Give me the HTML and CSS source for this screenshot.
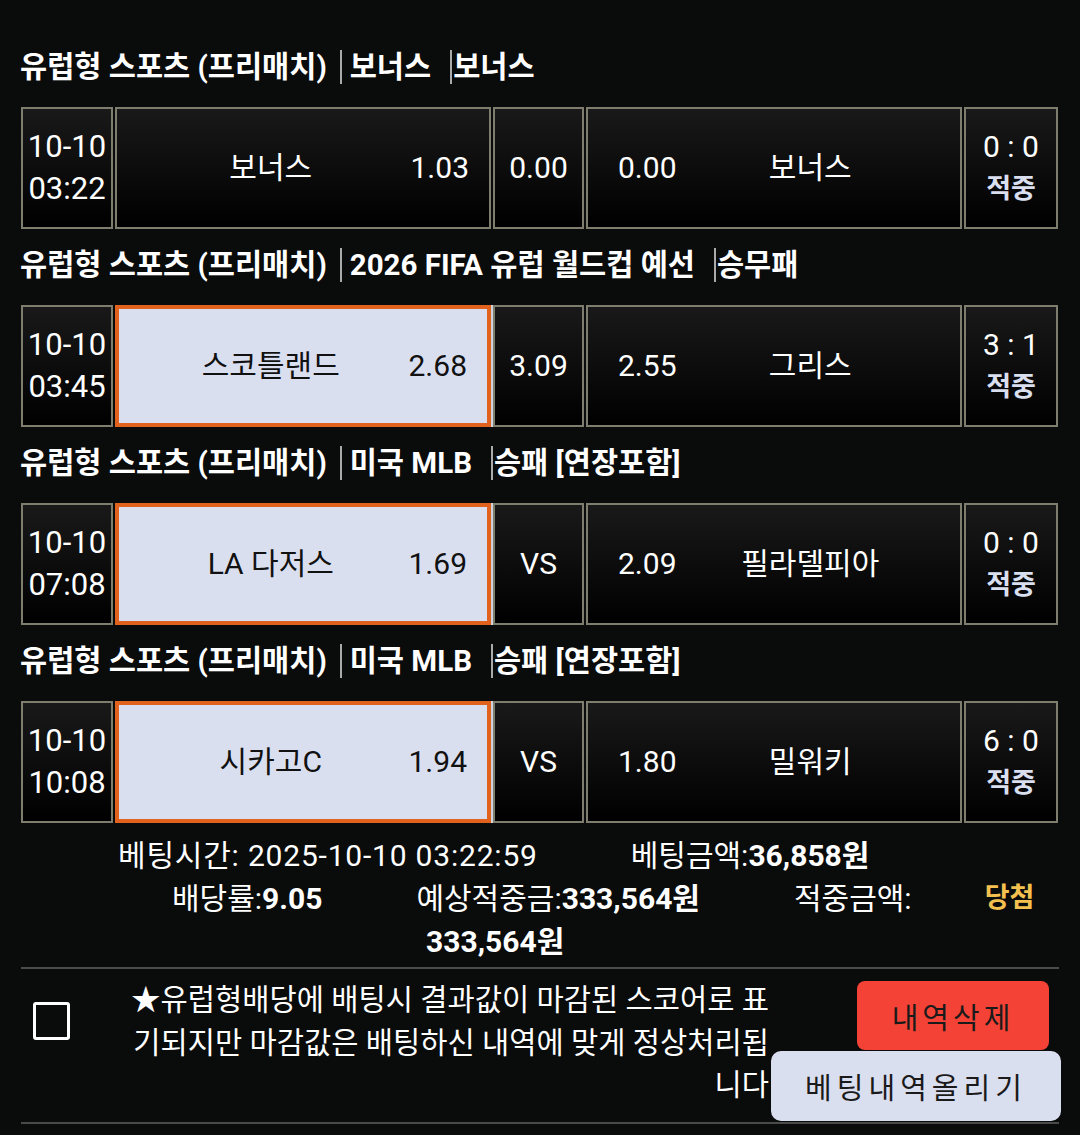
FILE: index.html
```html
<!DOCTYPE html>
<html lang="ko">
  <head>
    <meta charset="UTF-8" />
    <meta name="viewport" content="width=device-width, initial-scale=1.0" />
    <title>베팅내역</title>
    <link rel="stylesheet" href="styles.css">
  </head>

  <body>
    <main class="wrap">
      <!-- 경기 1 -->
      <section class="game">
        <h3 class="game-title">유럽형 스포츠 (프리매치)<span class="league">보너스</span><span class="market">보너스</span></h3>
        <div class="row">
          <div class="cell cell-date"><span>10-10</span><span>03:22</span></div>
          <div class="cell cell-home"><span class="team">보너스</span><span class="odds">1.03</span></div>
          <div class="cell cell-draw">0.00</div>
          <div class="cell cell-away"><span class="odds">0.00</span><span class="team">보너스</span></div>
          <div class="cell cell-score"><span>0 : 0</span><b>적중</b></div>
        </div>
      </section>

      <!-- 경기 2 -->
      <section class="game">
        <h3 class="game-title">유럽형 스포츠 (프리매치)<span class="league">2026 FIFA 유럽 월드컵 예선</span><span class="market">승무패</span></h3>
        <div class="row">
          <div class="cell cell-date"><span>10-10</span><span>03:45</span></div>
          <div class="cell cell-home picked"><span class="team">스코틀랜드</span><span class="odds">2.68</span></div>
          <div class="cell cell-draw">3.09</div>
          <div class="cell cell-away"><span class="odds">2.55</span><span class="team">그리스</span></div>
          <div class="cell cell-score"><span>3 : 1</span><b>적중</b></div>
        </div>
      </section>

      <!-- 경기 3 -->
      <section class="game">
        <h3 class="game-title">유럽형 스포츠 (프리매치)<span class="league">미국 MLB</span><span class="market">승패 [연장포함]</span></h3>
        <div class="row">
          <div class="cell cell-date"><span>10-10</span><span>07:08</span></div>
          <div class="cell cell-home picked"><span class="team">LA 다저스</span><span class="odds">1.69</span></div>
          <div class="cell cell-draw">VS</div>
          <div class="cell cell-away"><span class="odds">2.09</span><span class="team">필라델피아</span></div>
          <div class="cell cell-score"><span>0 : 0</span><b>적중</b></div>
        </div>
      </section>

      <!-- 경기 4 -->
      <section class="game">
        <h3 class="game-title">유럽형 스포츠 (프리매치)<span class="league">미국 MLB</span><span class="market">승패 [연장포함]</span></h3>
        <div class="row">
          <div class="cell cell-date"><span>10-10</span><span>10:08</span></div>
          <div class="cell cell-home picked"><span class="team">시카고C</span><span class="odds">1.94</span></div>
          <div class="cell cell-draw">VS</div>
          <div class="cell cell-away"><span class="odds">1.80</span><span class="team">밀워키</span></div>
          <div class="cell cell-score"><span>6 : 0</span><b>적중</b></div>
        </div>
      </section>

      <!-- 요약 -->
      <section class="summary">
        <div class="sum-line line-1">
          <span class="bet-time">베팅시간: 2025-10-10 03:22:59</span>
          <span>베팅금액:<b>36,858원</b></span>
        </div>
        <div class="sum-line line-2">
          <span>배당률:<b>9.05</b></span>
          <span>예상적중금:<b>333,564원</b></span>
          <span>적중금액:</span>
          <b class="win">당첨</b>
        </div>
        <div class="sum-line line-3">
          <b>333,564원</b>
        </div>
      </section>

      <section class="notice">
        <div class="check"><span class="box"></span></div>
        <p class="notice-text">★유럽형배당에 배팅시 결과값이 마감된 스코어로 표기되지만 마감값은 배팅하신 내역에 맞게 정상처리됩니다</p>
        <div class="actions">
          <button class="btn btn-del">내역삭제</button>
          <button class="btn btn-up">베팅내역올리기</button>
        </div>
      </section>
    </main>
  </body>
</html>
```

FILE: styles.css
```css
html,
body {
  margin: 0;
  background: #0a0b0b;
  color: #fff;
  font-family: Roboto, "Noto Sans CJK KR", sans-serif;
}

.wrap {
  width: 1038px;
  padding: 31px 0 0 21px;
}

.game-title {
  margin: 16px 0 20px -1px;
  height: 40px;
  line-height: 40px;
  font-size: 29.5px;
  font-weight: 700;
  white-space: nowrap;
}
.league {
  margin-left: 13px;
  padding-left: 8px;
  border-left: 2px solid #aaa;
}
.market {
  margin-left: 19px;
  padding-left: 1px;
  border-left: 2px solid #aaa;
}

.row {
  display: flex;
  gap: 2px;
  height: 122px;
}

.cell {
  box-sizing: border-box;
  border: 2px solid #7f7d6e;
  background: linear-gradient(#191919, #000);
  display: flex;
  align-items: center;
  font-size: 30px;
  line-height: 42px;
}

.cell-date,
.cell-score {
  flex-direction: column;
  justify-content: center;
  text-align: center;
}
.cell-date {
  width: 92px;
  font-size: 31px;
}
.cell-home,
.cell-away {
  width: 376px;
}
.cell-home .team,
.cell-away .team {
  flex: 1;
  text-align: center;
}
.cell-home .team {
  padding-left: 14px;
}
.cell-away .team {
  padding-right: 16px;
}
.cell-home .odds {
  padding-right: 20px;
}
.cell-away .odds {
  padding-left: 30px;
}
.cell-draw {
  width: 91px;
  justify-content: center;
}
.cell-score {
  width: 94px;
  font-size: 30px;
}
.cell-score b {
  color: #dadff0;
  font-size: 27px;
}

.picked {
  border: 4px solid #e0621c;
  background: #dadff0;
  color: #111;
  box-shadow: 4px 0 0 #cfd2dc;
}

.summary {
  padding-top: 11px;
  font-size: 30px;
  line-height: 43px;
}
.sum-line {
  display: flex;
  white-space: nowrap;
}
.sum-line b {
  font-weight: 700;
}
.line-1 {
  padding-left: 97px;
  gap: 93px;
}
.bet-time {
  letter-spacing: 0.8px;
}
.line-2 {
  padding-left: 151px;
  gap: 94px;
}
.line-2 .win {
  margin-left: -21px;
  font-size: 27px;
  color: #f4c150;
}
.line-3 {
  padding-left: 405px;
}

.notice {
  margin-top: 4px;
  border-top: 2px solid #4a4a4a;
  border-bottom: 2px solid #4a4a4a;
  display: flex;
  height: 153px;
}
.check {
  width: 107px;
}
.box {
  display: block;
  width: 31px;
  height: 32px;
  margin: 33px 0 0 12px;
  border: 3px solid #fff;
  border-radius: 3px;
}
.notice-text {
  width: 641px;
  margin: 10px 0 0;
  font-size: 29.6px;
  line-height: 42.5px;
  text-align: right;
}
.actions {
  display: flex;
  flex-direction: column;
  align-items: flex-end;
  flex: 1;
  margin-right: -2px;
}
.btn {
  border: none;
  font-family: Roboto, "Noto Sans CJK KR", sans-serif;
  font-size: 29px;
  color: #1a1a1a;
  cursor: pointer;
}
.btn-del {
  margin: 12px 12px 0 0;
  width: 192px;
  height: 69px;
  border-radius: 8px;
  background: #f44336;
  letter-spacing: 4px;
}
.btn-up {
  margin-top: 1px;
  width: 290px;
  height: 70px;
  border-radius: 10px;
  background: #dadff0;
  letter-spacing: 5px;
}
```
